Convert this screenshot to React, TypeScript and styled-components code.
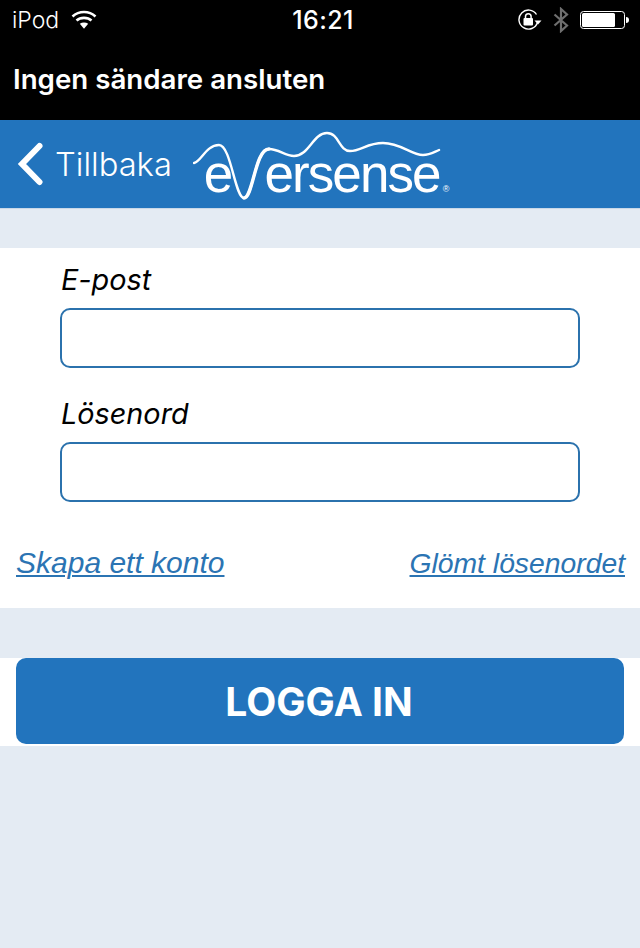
// App.tsx
import React from 'react';
import styled, { createGlobalStyle } from 'styled-components';

const GlobalStyle = createGlobalStyle`
  html, body {
    margin: 0;
    padding: 0;
    background: #e4ebf3;
    font-family: Inter, "Liberation Sans", sans-serif;
  }
  * { box-sizing: border-box; }
`;

const Screen = styled.div`
  width: 640px;
  height: 948px;
  display: flex;
  flex-direction: column;
  background: #e4ebf3;
  overflow: hidden;
`;

const StatusBar = styled.div`
  height: 40px;
  background: #000;
  color: #fff;
  display: grid;
  grid-template-columns: 1fr auto 1fr;
  align-items: center;
  padding: 0 11px 0 12px;
`;

const StatusLeft = styled.div`
  display: flex;
  align-items: center;
  gap: 12px;
  font-size: 23px;
  font-weight: 300;
`;

const Clock = styled.div`
  font-size: 25px;
  font-weight: 500;
  letter-spacing: 0.4px;
  margin-left: 5px;
`;

const StatusRight = styled.div`
  display: flex;
  align-items: center;
  justify-content: flex-end;
  gap: 11px;
`;

const Notice = styled.div`
  height: 80px;
  background: #000;
  color: #fff;
  display: flex;
  align-items: center;
  padding: 0 13px 2px;
  font-size: 27.700px;
  font-weight: 600;
`;

const NavBar = styled.header`
  height: 89px;
  background: #2274bd;
  border-bottom: 1px solid #c9d8e8;
  display: flex;
  align-items: center;
  padding-left: 17px;
  color: #fff;
`;

const BackLabel = styled.span`
  font-size: 32.700px;
  font-weight: 300;
  margin-left: 10px;
`;

const Logo = styled.div`
  position: relative;
  width: 256px;
  height: 72px;
  margin-left: 21px;
`;

const LogoWave = styled.svg`
  position: absolute;
  left: 0;
  top: 0;
`;

const LogoWord = styled.span`
  position: absolute;
  left: 11px;
  top: 17px;
  font-family: "Liberation Sans", Arial, sans-serif;
  font-size: 53px;
  line-height: 58px;
  font-weight: 400;
  letter-spacing: -1.900px;
  white-space: nowrap;
`;

const LogoGap = styled.span`
  display: inline-block;
  width: 33px;
`;

const LogoMark = styled.span`
  font-size: 9px;
  letter-spacing: 0;
  margin-left: 3px;
`;

const Spacer = styled.div<{ $h: number }>`
  height: ${p => p.$h}px;
  flex: none;
`;

const FormCard = styled.section`
  height: 360px;
  background: #fff;
  padding-top: 14px;
`;

const Field = styled.div`
  padding: 0 60px;
  margin-bottom: 28px;
`;

const FieldLabel = styled.label`
  display: block;
  font-size: 28.800px;
  font-style: italic;
  font-weight: 400;
  line-height: 36px;
  color: #000;
  margin-bottom: 10px;
  padding-left: 1px;
`;

const TextInput = styled.input`
  display: block;
  width: 100%;
  height: 60px;
  border: 2px solid #2b72ad;
  border-radius: 10px;
  background: #fff;
  outline: none;
`;

const LinkRow = styled.div`
  display: flex;
  justify-content: space-between;
  align-items: baseline;
  padding: 16px 15px 0 16px;
`;

const TextLink = styled.a<{ $size: number }>`
  font-family: "Liberation Sans", Arial, sans-serif;
  font-size: ${p => p.$size}px;
  font-style: italic;
  font-weight: 400;
  color: #2b74b3;
  text-decoration: underline;
  text-decoration-thickness: 2px;
  text-underline-offset: 2px;
`;

const ButtonRow = styled.div`
  height: 88px;
  background: #fff;
  padding: 0 16px 2px;
`;

const LoginButton = styled.button`
  width: 100%;
  height: 86px;
  border: none;
  border-radius: 10px;
  padding: 0 2px 0 0;
  background: #2274bd;
  color: #fff;
  font-family: inherit;
  font-size: 39px;
  font-weight: 700;
`;

const WifiIcon = () => (
  <svg width="26" height="20" viewBox="0 0 26 20" fill="none">
    <path d="M1.500 6.500C8 0.500 18 0.500 24.500 6.500" stroke="#fff" strokeWidth="2.600" />
    <path d="M5.500 10.500C9.500 7 16.500 7 20.500 10.500" stroke="#fff" strokeWidth="2.600" />
    <path d="M8.800 13.800C11.300 12.200 14.700 12.200 17.200 13.800L13 18.800Z" fill="#fff" />
  </svg>
);

const RotationIcon = () => (
  <svg width="24" height="22" viewBox="0 0 24 22" fill="none">
    <path d="M19.500 13.500A9.500 9.500 0 1 1 18.500 5.500" stroke="#fff" strokeWidth="1.400" />
    <path d="M16.500 11.500h7l-3.500 4z" fill="#fff" />
    <rect x="5.500" y="9" width="9.500" height="7.500" rx="1" fill="#fff" />
    <path d="M7.500 9V7.500a2.800 2.800 0 0 1 5.600 0V9" stroke="#fff" strokeWidth="1.500" />
  </svg>
);

const BluetoothIcon = () => (
  <svg width="16" height="26" viewBox="0 0 16 26" fill="none">
    <path d="M1.500 7.500L14 18.500L8 24V2L14 7.500L1.500 18.500" stroke="#6f6f6f" strokeWidth="2.200" />
  </svg>
);

const BatteryIcon = () => (
  <svg width="49" height="20" viewBox="0 0 49 20" fill="none">
    <rect x="0.500" y="1.500" width="44" height="17" rx="3" stroke="#fff" />
    <rect x="2" y="3" width="33" height="14" rx="1.500" fill="#fff" />
    <path d="M46 7c2 0 3 1 3 3s-1 3-3 3z" fill="#fff" />
  </svg>
);

const BackChevron = () => (
  <svg width="28" height="44" viewBox="0 0 28 44" fill="none">
    <path d="M22.500 4L5 22L22.500 40" stroke="#fff" strokeWidth="6" strokeLinecap="round" />
  </svg>
);

const App = () => {
  return (
    <Screen>
      <GlobalStyle />
      <StatusBar>
        <StatusLeft>
          iPod
          <WifiIcon />
        </StatusLeft>
        <Clock>16:21</Clock>
        <StatusRight>
          <RotationIcon />
          <BluetoothIcon />
          <BatteryIcon />
        </StatusRight>
      </StatusBar>
      <Notice>Ingen sändare ansluten</Notice>
      <NavBar>
        <BackChevron />
        <BackLabel>Tillbaka</BackLabel>
        <Logo>
          <LogoWave width="256" height="72" viewBox="0 0 256 72" fill="none">
            <path
              d="M1 35C8 34 13 17 26 17C38 17 42 70 51 70C60 70 62 21 76 21C86 21 92 28 101 28C116 28 120 5 134 5C146 5 146 23 157 23C168 23 174 15 190 15C208 15 218 27 230 27C237 27 241 24 246 22"
              stroke="#fff"
              strokeWidth="2.400"
              strokeLinecap="round"
            />
            <path d="M51 70C60 70 62 21 76 21" stroke="#fff" strokeWidth="3.400" strokeLinecap="round" />
          </LogoWave>
          <LogoWord>
            e<LogoGap />ersense<LogoMark>®</LogoMark>
          </LogoWord>
        </Logo>
      </NavBar>
      <Spacer $h={39} />
      <FormCard>
        <Field>
          <FieldLabel>E-post</FieldLabel>
          <TextInput />
        </Field>
        <Field>
          <FieldLabel>Lösenord</FieldLabel>
          <TextInput type="password" />
        </Field>
        <LinkRow>
          <TextLink $size={30}>Skapa ett konto</TextLink>
          <TextLink $size={28.3}>Glömt lösenordet</TextLink>
        </LinkRow>
      </FormCard>
      <Spacer $h={50} />
      <ButtonRow>
        <LoginButton>LOGGA IN</LoginButton>
      </ButtonRow>
    </Screen>
  );
};

export default App;
